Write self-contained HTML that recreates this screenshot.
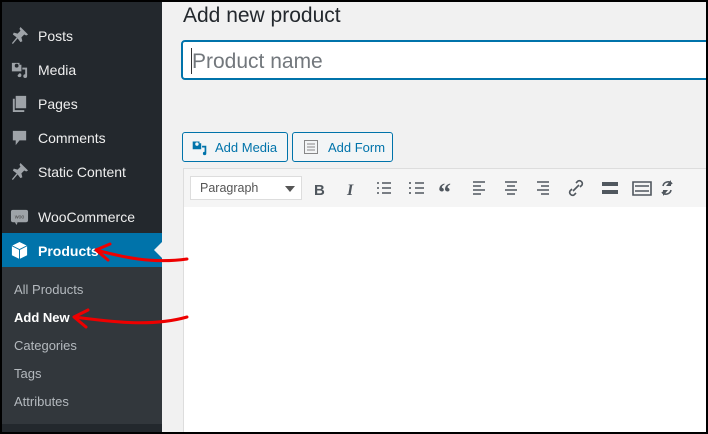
<!DOCTYPE html>
<html><head><style>
*{margin:0;padding:0;box-sizing:border-box}
body{width:708px;height:434px;background:#000;font-family:"Liberation Sans",sans-serif;position:relative;overflow:hidden}
#wrap{position:absolute;left:2px;top:2px;width:704px;height:430px;background:#f1f1f1;overflow:hidden}
#side{position:absolute;left:0;top:0;width:160px;height:430px;background:#23282d}
.mi{position:absolute;left:0;width:160px;height:34px;color:#eee;font-size:14px;line-height:36px;padding-left:36px}
.ic{position:absolute;left:8px;top:8px;width:19px;height:19px}
#prod{background:#0073aa;color:#fff;top:231px}
#sub{position:absolute;left:0;top:265px;width:160px;height:157px;background:#32373c}
.si{position:absolute;left:12px;font-size:13px;color:#b4b9be}
#main{position:absolute;left:160px;top:0;right:0;bottom:0}
h1{position:absolute;left:21px;top:2px;font-weight:400;font-size:21px;color:#23282d}
#inp{position:absolute;left:19px;top:38px;width:540px;height:40px;background:#fff;border:2px solid #0073aa;border-radius:4px;font-size:21px;color:#72777c;padding:8px 0 0 9px}
#inp:before{content:"";position:absolute;left:8px;top:6px;width:1px;height:26px;background:#333}
.btn{position:absolute;top:130px;height:30px;border:1px solid #0073aa;border-radius:3px;background:#f3f5f6;color:#0073aa;font-size:13px;line-height:29px;padding-left:32px}
#tb{position:absolute;left:21px;top:166px;width:540px;height:40px;background:#f5f5f5;border:1px solid #ddd;border-right:none}
#para{position:absolute;left:6px;top:7px;width:112px;height:24px;background:#fff;border:1px solid #ddd;font-size:12.5px;color:#555;line-height:23px;padding-left:9px}
#para:after{content:"";position:absolute;right:6px;top:9px;border:5px solid transparent;border-top:6px solid #555;border-bottom:0}
#ed{position:absolute;left:21px;top:205px;width:540px;height:230px;background:#fff;border-left:1px solid #ddd}
</style></head><body>
<div id="wrap">
<div id="side">
<div class="mi" style="top:16px"><svg class="ic" viewBox="0 0 20 20"><path fill="#9ea3a8" d="M11 1l8 8-2 1-2-1-3 3 1 4-2 1-3-4-5 6-1-1 5-6-4-3 1-2 4 1 3-3-1-2z"/></svg>Posts</div>
<div class="mi" style="top:50px"><svg class="ic" viewBox="0 0 20 20"><path fill="#9ea3a8" d="M2 3h8v2h2v7H2zM5 6a2 2 0 104 0 2 2 0 00-4 0zM13 8h5v9a2 2 0 11-2-2V10h-3zM10 14a2 2 0 11-2 2"/></svg>Media</div>
<div class="mi" style="top:84px"><svg class="ic" viewBox="0 0 20 20"><path fill="#9ea3a8" d="M6 2h11v13H6zM3 5h2v12h10v2H3z"/></svg>Pages</div>
<div class="mi" style="top:118px"><svg class="ic" viewBox="0 0 20 20"><path fill="#9ea3a8" d="M3 3h14v10H10l-4 5v-5H3z"/></svg>Comments</div>
<div class="mi" style="top:152px"><svg class="ic" viewBox="0 0 20 20"><path fill="#9ea3a8" d="M11 1l8 8-2 1-2-1-3 3 1 4-2 1-3-4-5 6-1-1 5-6-4-3 1-2 4 1 3-3-1-2z"/></svg>Static Content</div>
<div class="mi" style="top:197px"><svg class="ic" viewBox="0 0 20 20"><rect x="1" y="3" width="18" height="13" rx="2" fill="#9ea3a8"/><path d="M5 16l2 3 1-3z" fill="#9ea3a8"/><text x="10" y="12" font-size="5.5" fill="#444" text-anchor="middle" font-family="Liberation Sans">woo</text></svg>WooCommerce</div>
<div class="mi" id="prod"><svg class="ic" viewBox="0 0 20 20"><path fill="#fff" d="M10 1l8 4v10l-8 4-8-4V5z"/><path d="M2 5l8 4 8-4M10 9v10" stroke="#0073aa" stroke-width="1" fill="none"/></svg><b>Products</b>
<div style="position:absolute;right:0;top:9px;border:8px solid transparent;border-right:8px solid #f1f1f1;border-left:0"></div></div>
<div id="sub">
<div class="si" style="top:15px">All Products</div>
<div class="si" style="top:43px;color:#fff;font-weight:bold">Add New</div>
<div class="si" style="top:71px">Categories</div>
<div class="si" style="top:99px">Tags</div>
<div class="si" style="top:127px">Attributes</div>
</div>
</div>
<div id="main">
<h1>Add new product</h1>
<div id="inp">Product name</div>
<div class="btn" style="left:20px;width:106px"><svg style="position:absolute;left:8px;top:6px" width="17" height="17" viewBox="0 0 20 20"><path fill="#0073aa" d="M2 3h8v2h2v7H2zM5 6a2 2 0 104 0 2 2 0 00-4 0zM13 8h5v9a2 2 0 11-2-2V10h-3z"/></svg>Add Media</div>
<div class="btn" style="left:130px;width:101px;padding-left:35px"><svg style="position:absolute;left:10px;top:6px" width="16" height="16" viewBox="0 0 16 16"><rect x="1.5" y="1.5" width="13" height="13" fill="none" stroke="#888"/><path d="M4 5h8M4 8h8M4 11h8" stroke="#888"/></svg>Add Form</div>
<div id="tb">
<div id="para">Paragraph</div>
<svg style="position:absolute;left:0;top:0" width="540" height="40" viewBox="0 0 540 40">
<g fill="#50575e" stroke="none">
<text x="130" y="26" font-size="15" font-weight="bold" font-family="Liberation Sans">B</text>
<text x="163" y="26" font-size="16" font-style="italic" font-weight="bold" font-family="Liberation Serif">I</text>
<text x="254" y="32" font-size="26" font-weight="bold" font-family="Liberation Serif">“</text>
</g>
<g stroke="#50575e" stroke-width="1.6" fill="none">
<path d="M198 14h9M198 19h9M198 24h9"/><path d="M193 14h2M193 19h2M193 24h2"/>
<path d="M231 14h9M231 19h9M231 24h9"/><path d="M226 13v2M226 18v2M226 23v2"/>
<path d="M289 13h12M289 17h8M289 21h12M289 25h8"/>
<path d="M321 13h12M323 17h8M321 21h12M323 25h8"/>
<path d="M353 13h12M357 17h8M353 21h12M357 25h8"/>
<path d="M389 22l6-6M388 20l-2 2a3 3 0 004 4l2-2M396 18l2-2a3 3 0 00-4-4l-2 2"/>
<path d="M449 13h18v13h-18zM451 17h14M451 22h14"/>
<path d="M488 15a5 5 0 00-9 2M478 23a5 5 0 009-2"/>
</g>
<g fill="#50575e"><rect x="418" y="13" width="16" height="4"/><rect x="418" y="21" width="16" height="4"/><path d="M487 11v6h-5zM479 27v-6h5z"/></g>
</svg>
</div>
<div id="ed"></div>
</div>
<svg style="position:absolute;left:0;top:0" width="704" height="430" viewBox="0 0 704 430">
<path d="M185 257 C150 262 120 255 94 248 M94 248 l14 -6 M94 248 l12 10" stroke="#e00" stroke-width="3" fill="none" stroke-linecap="round"/>
<path d="M185 315 C150 325 110 320 72 315 M72 315 l14 -7 M72 315 l12 10" stroke="#e00" stroke-width="3" fill="none" stroke-linecap="round"/>
</svg>
</div>
</body></html>
